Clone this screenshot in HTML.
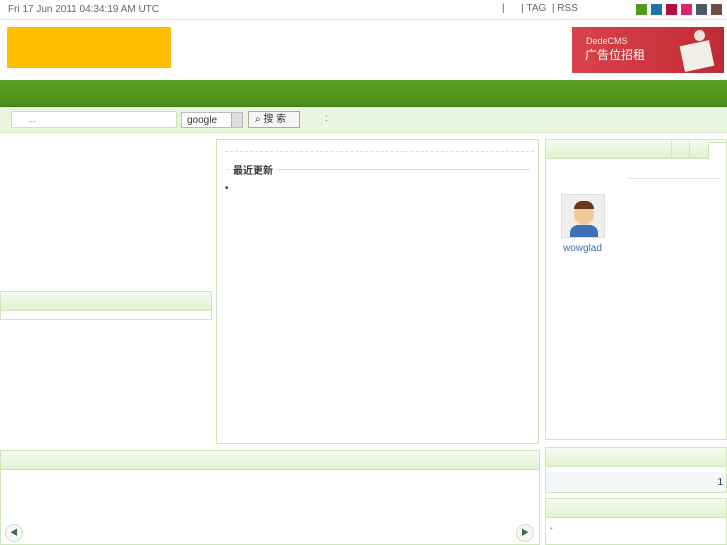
<!DOCTYPE html><html><head><meta charset="utf-8"><style>
*{margin:0;padding:0;box-sizing:border-box}
body{width:727px;height:545px;overflow:hidden;background:#fff;font-family:"Liberation Sans","Noto Sans CJK SC",sans-serif;font-size:10px;color:#555;position:relative}
.a{position:absolute}
.box{position:absolute;border:1px solid #cfe6bc}
.hd{background:linear-gradient(#f7fcf2,#e0f1cf);border-bottom:1px solid #cfe6bc}
.sq{position:absolute;top:4px;width:11px;height:11px}
</style></head><body>
<div class="a" style="left:8px;top:4px;color:#666">Fri 17 Jun 2011 04:34:19 AM UTC</div>
<div class="a" style="left:502px;top:3px;color:#666">|&nbsp;&nbsp;&nbsp;&nbsp;&nbsp;&nbsp;| TAG &nbsp;| RSS</div>
<div class="sq" style="left:636px;background:#4e9a1e"></div>
<div class="sq" style="left:651px;background:#1f73a8"></div>
<div class="sq" style="left:666px;background:#b0123f"></div>
<div class="sq" style="left:681px;background:#d6266f"></div>
<div class="sq" style="left:696px;background:#4f5963"></div>
<div class="sq" style="left:711px;background:#6e5043"></div>
<div class="a" style="left:0;top:19px;width:727px;height:1px;background:#e4e4e4"></div>
<div class="a" style="left:7px;top:27px;width:164px;height:41px;background:#ffbf00"></div>
<div class="a" style="left:572px;top:27px;width:152px;height:46px;background:linear-gradient(90deg,#d9444a,#c02a34);color:#fde;font-size:9px">
<div style="position:absolute;left:14px;top:9px">DedeCMS</div>
<div style="position:absolute;left:13px;top:19px;font-size:12px;color:#fff">广告位招租</div>
<div style="position:absolute;left:110px;top:16px;width:30px;height:26px;background:#f2efe8;transform:rotate(-12deg)"></div>
<div style="position:absolute;left:122px;top:3px;width:11px;height:11px;border-radius:50%;background:#e8e2d8"></div></div>
<div class="a" style="left:0;top:80px;width:727px;height:27px;background:linear-gradient(#5ea125,#4b8d17);border-bottom:1px solid #3f7c10"></div>
<div class="a" style="left:0;top:107px;width:727px;height:26px;background:#eaf5e0;border-bottom:1px solid #d6eac6"></div>
<div class="a" style="left:11px;top:111px;width:166px;height:17px;background:#fff;border:1px solid #cde3bd;padding:2px 16px;font-size:9px;color:#888">...</div>
<div class="a" style="left:181px;top:112px;width:62px;height:16px;background:#fff;border:1px solid #bbb;padding:2px 5px;color:#333">google<span style="position:absolute;right:0;top:0;width:11px;height:14px;background:#ddd;border-left:1px solid #aaa"></span></div>
<div class="a" style="left:248px;top:111px;width:52px;height:17px;background:#f6f6f6;border:1px solid #aaa;color:#333;line-height:15px;padding-left:6px;font-size:10px">&#x2315; 搜 索</div>
<div class="a" style="left:325px;top:113px;color:#666">:</div>
<div class="box" style="left:0;top:291px;width:212px;height:29px"><div class="hd" style="height:19px"></div></div>
<div class="box" style="left:216px;top:139px;width:323px;height:305px">
<div style="position:absolute;left:8px;right:4px;top:11px;border-top:1px dashed #ddd"></div>
<div style="position:absolute;left:9px;right:8px;top:29px;border-top:1px solid #ddd"></div>
<div style="position:absolute;left:12px;top:22px;background:#fff;padding:0 4px;font-weight:bold;color:#333;font-size:10px">最近更新</div>
<div style="position:absolute;left:8px;top:43px;color:#333">•</div></div>
<div class="box" style="left:545px;top:139px;width:182px;height:301px">
<div class="hd" style="height:19px"><div style="position:absolute;left:125px;top:0;width:1px;height:19px;background:#cfe6bc"></div><div style="position:absolute;left:143px;top:0;width:1px;height:19px;background:#cfe6bc"></div><div style="position:absolute;left:162px;top:2px;width:19px;height:18px;background:#fff;border:1px solid #cfe6bc;border-bottom:none"></div></div>
<div style="position:absolute;left:82px;right:6px;top:38px;border-top:1px solid #e4e4e4"></div>
<div style="position:absolute;left:15px;top:54px;width:44px;height:44px;border:1px solid #ddd;background:#eee"><div style="position:absolute;left:12px;top:8px;width:20px;height:22px;border-radius:50%;background:#f4c99a"></div><div style="position:absolute;left:12px;top:6px;width:20px;height:8px;border-radius:8px 8px 0 0;background:#6b3a1e"></div><div style="position:absolute;left:8px;top:30px;width:28px;height:12px;border-radius:8px 8px 0 0;background:#3f6fb4"></div></div>
<div style="position:absolute;left:17px;top:103px;color:#3a70b0;font-size:10px">wowglad</div></div>
<div class="box" style="left:0;top:450px;width:540px;height:95px"><div class="hd" style="height:19px"></div>
<div style="position:absolute;left:4px;top:73px;width:18px;height:18px;border-radius:50%;border:1px solid #cfe6bc;background:#f7f7f7;color:#3a6a5a;font-size:8px;text-align:center;line-height:16px">◀</div>
<div style="position:absolute;left:515px;top:73px;width:18px;height:18px;border-radius:50%;border:1px solid #cfe6bc;background:#f7f7f7;color:#3a6a5a;font-size:8px;text-align:center;line-height:16px">▶</div></div>
<div class="box" style="left:545px;top:447px;width:182px;height:46px"><div class="hd" style="height:19px"></div>
<div style="position:absolute;left:0;right:0;top:24px;height:20px;background:#f5f6f8;text-align:right;padding:5px 3px 0;color:#333">1</div></div>
<div class="box" style="left:545px;top:498px;width:182px;height:47px"><div class="hd" style="height:19px"></div>
<div style="position:absolute;left:4px;top:25px;color:#aaa;font-size:8px">•</div></div>
</body></html>
